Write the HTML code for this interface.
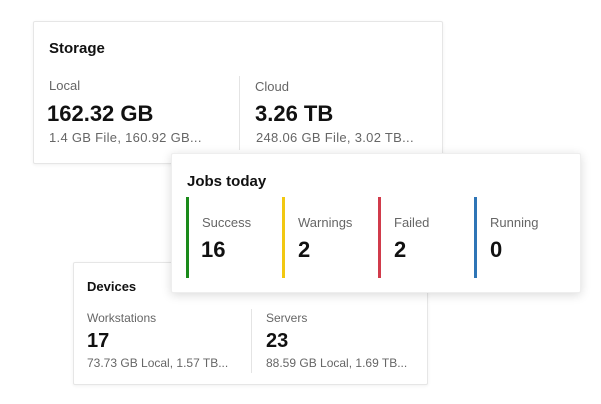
<!DOCTYPE html>
<html><head><style>
*{margin:0;padding:0;box-sizing:border-box}
body{width:601px;height:404px;background:#fff;position:relative;overflow:hidden;font-family:"Liberation Sans",sans-serif;color:#111}
.card{position:absolute;background:#fff;border:1px solid #e6e6e6;border-radius:2px}
.t{position:absolute;white-space:nowrap}
.g{color:#666}
.b{font-weight:bold}
.div{position:absolute;width:1px;background:#e4e4e4}
.bar{position:absolute;width:3px;top:43px;height:81px}
</style></head><body>
<div class="card" style="left:33px;top:21px;width:410px;height:143px;box-shadow:0 1px 3px rgba(0,0,0,.06)">
 <div class="t b" style="left:15px;top:18px;font-size:15px">Storage</div>
 <div class="t g" style="left:15px;top:56px;font-size:13px">Local</div>
 <div class="t b" style="left:13px;top:79px;font-size:22px">162.32 GB</div>
 <div class="t g" style="left:15px;top:108px;font-size:13px;letter-spacing:.3px">1.4 GB File, 160.92 GB...</div>
 <div class="div" style="left:205px;top:54px;height:74px"></div>
 <div class="t g" style="left:221px;top:57px;font-size:13px">Cloud</div>
 <div class="t b" style="left:221px;top:79px;font-size:22px">3.26 TB</div>
 <div class="t g" style="left:222px;top:108px;font-size:13px;letter-spacing:.3px">248.06 GB File, 3.02 TB...</div>
</div>
<div class="card" style="left:73px;top:262px;width:355px;height:123px;box-shadow:0 1px 3px rgba(0,0,0,.06)">
 <div class="t b" style="left:13px;top:16px;font-size:13px">Devices</div>
 <div class="t g" style="left:13px;top:48px;font-size:12px">Workstations</div>
 <div class="t b" style="left:13px;top:67px;font-size:20px">17</div>
 <div class="t g" style="left:13px;top:93px;font-size:12px">73.73 GB Local, 1.57 TB...</div>
 <div class="div" style="left:177px;top:46px;height:64px"></div>
 <div class="t g" style="left:192px;top:48px;font-size:12px">Servers</div>
 <div class="t b" style="left:192px;top:67px;font-size:20px">23</div>
 <div class="t g" style="left:192px;top:93px;font-size:12px">88.59 GB Local, 1.69 TB...</div>
</div>
<div class="card" style="left:171px;top:153px;width:410px;height:140px;border-color:#eee;box-shadow:0 2px 10px rgba(0,0,0,.15)">
 <div class="t b" style="left:15px;top:19px;font-size:15px">Jobs today</div>
 <div class="bar" style="left:14px;background:#1a8a1a"></div>
 <div class="bar" style="left:110px;background:#f2c811"></div>
 <div class="bar" style="left:206px;background:#d13b4b"></div>
 <div class="bar" style="left:302px;background:#2e75b6"></div>
 <div class="t g" style="left:30px;top:61px;font-size:13px">Success</div>
 <div class="t b" style="left:29px;top:83px;font-size:22px">16</div>
 <div class="t g" style="left:126px;top:61px;font-size:13px">Warnings</div>
 <div class="t b" style="left:126px;top:83px;font-size:22px">2</div>
 <div class="t g" style="left:222px;top:61px;font-size:13px">Failed</div>
 <div class="t b" style="left:222px;top:83px;font-size:22px">2</div>
 <div class="t g" style="left:318px;top:61px;font-size:13px">Running</div>
 <div class="t b" style="left:318px;top:83px;font-size:22px">0</div>
</div>
</body></html>
